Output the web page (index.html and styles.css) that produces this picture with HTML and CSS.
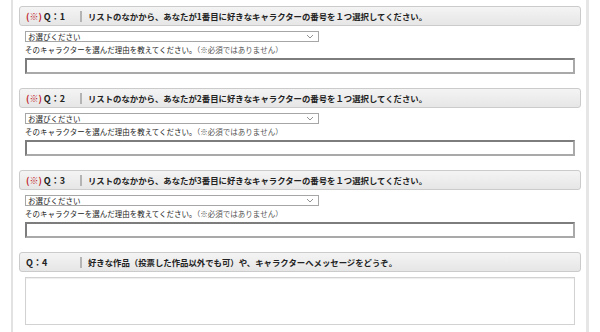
FILE: index.html
```html
<!DOCTYPE html>
<html lang="ja">
<head>
    <meta charset="UTF-8">
    <title>アンケート</title>
    <link rel="stylesheet" href="styles.css">
</head>
<body>
    <div class="wrap">
        <div class="question">
            <div class="qhead">
                <span class="qno"><span class="req">(※)</span> Q：1</span>
                <span class="qtext">リストのなかから、あなたが1番目に好きなキャラクターの番号を１つ選択してください。</span>
            </div>
            <div class="qbody">
                <select class="pick"><option>お選びください</option></select>
                <p class="note">そのキャラクターを選んだ理由を教えてください。<span class="opt">（※必須ではありません）</span></p>
                <input class="reason" type="text">
            </div>
        </div>

        <div class="question">
            <div class="qhead">
                <span class="qno"><span class="req">(※)</span> Q：2</span>
                <span class="qtext">リストのなかから、あなたが2番目に好きなキャラクターの番号を１つ選択してください。</span>
            </div>
            <div class="qbody">
                <select class="pick"><option>お選びください</option></select>
                <p class="note">そのキャラクターを選んだ理由を教えてください。<span class="opt">（※必須ではありません）</span></p>
                <input class="reason" type="text">
            </div>
        </div>

        <div class="question">
            <div class="qhead">
                <span class="qno"><span class="req">(※)</span> Q：3</span>
                <span class="qtext">リストのなかから、あなたが3番目に好きなキャラクターの番号を１つ選択してください。</span>
            </div>
            <div class="qbody">
                <select class="pick"><option>お選びください</option></select>
                <p class="note">そのキャラクターを選んだ理由を教えてください。<span class="opt">（※必須ではありません）</span></p>
                <input class="reason" type="text">
            </div>
        </div>

        <div class="question">
            <div class="qhead">
                <span class="qno">Q：4</span>
                <span class="qtext">好きな作品（投票した作品以外でも可）や、キャラクターへメッセージをどうぞ。</span>
            </div>
            <div class="qbody">
                <textarea class="message"></textarea>
            </div>
        </div>
    </div>
</body>
</html>
```

FILE: styles.css
```css
body {
    margin: 0;
    background: #fff;
    color: #222;
    font-family: "Noto Sans CJK JP", "Noto Sans", sans-serif;
    overflow: hidden;
}

.wrap {
    margin: 0 11px;
    min-height: 332px;
    border-left: 2px solid #e2e2e2;
    border-right: 3px solid #e6e6e6;
    padding: 6px 5px 0 6px;
}

.question {
    margin-bottom: 14px;
}

.qhead {
    display: flex;
    align-items: center;
    height: 20px;
    box-sizing: border-box;
    padding: 0 6px;
    background: linear-gradient(#f4f4f4, #e6e6e6);
    border: 1px solid #cbcbcb;
    border-radius: 3px;
    font-size: 9px;
    font-weight: bold;
    color: #222;
    margin-bottom: 5px;
}

.qno {
    width: 54px;
    flex: none;
    white-space: nowrap;
}

.req {
    color: #c0222a;
}

.qtext {
    border-left: 2px solid #b4b4b4;
    padding-left: 6px;
    font-size: 8.4px;
    line-height: 11px;
    white-space: nowrap;
}

.qbody {
    padding: 0 6px;
}

.pick {
    display: block;
    width: 294px;
    height: 11px;
    margin: 0;
    padding: 0 0 0 2px;
    box-sizing: border-box;
    border: 1px solid #a6a6a6;
    border-radius: 0;
    font-family: inherit;
    font-size: 7.5px;
    line-height: 9px;
    color: #222;
    appearance: none;
    background: #fff url("data:image/svg+xml,%3Csvg xmlns='http://www.w3.org/2000/svg' width='8' height='5'%3E%3Cpath d='M1 1l3 3 3-3' fill='none' stroke='%23777' stroke-width='0.8'/%3E%3C/svg%3E") no-repeat right 4px center;
}

.note {
    margin: 2px 0 0;
    font-size: 7.5px;
    line-height: 12px;
    color: #222;
    white-space: nowrap;
}

.opt {
    color: #555;
}

.reason {
    display: block;
    width: 100%;
    height: 16px;
    margin: 2px 0 0;
    box-sizing: border-box;
    border: 2px solid #7d7d7d;
    border-right-color: #a9a9a9;
    border-bottom-color: #a9a9a9;
    padding: 0 3px;
    background: #fff;
}

.message {
    display: block;
    width: 100%;
    height: 48px;
    margin: 0;
    box-sizing: border-box;
    border: 1px solid #d2d2d2;
    box-shadow: inset 0 1px 1px #eee;
    resize: none;
    background: #fff;
}
```
